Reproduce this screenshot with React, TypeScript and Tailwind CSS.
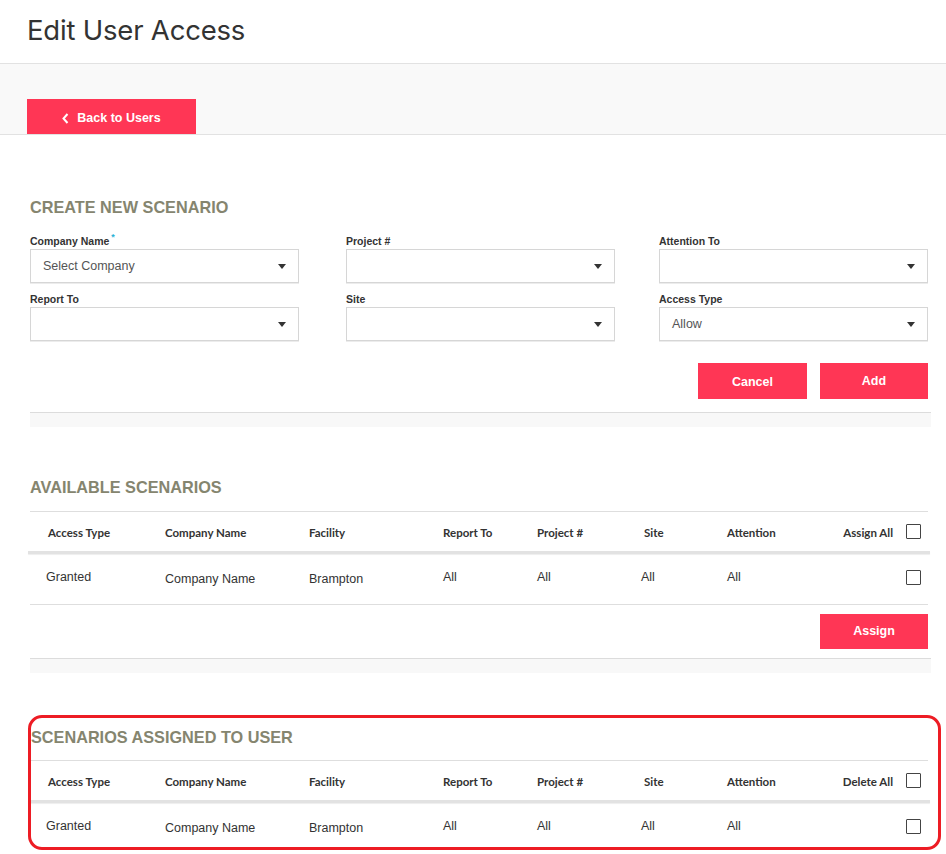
import React from 'react';

const RED = 'bg-[#ff3655]';

const Caret: React.FC = () => (
  <svg width="8" height="5" viewBox="0 0 8 5" className="shrink-0">
    <path d="M0 0h8L4 5z" fill="#333" />
  </svg>
);

const SelectBox: React.FC<{ label: string; value?: string; required?: boolean }> = ({ label, value, required }) => (
  <div className="flex w-[269px] flex-col">
    <label className="flex h-[18px] items-end pb-[2px] text-[10.5px] font-bold leading-[12px] text-[#333] font-['Liberation_Sans',Arial,sans-serif]">
      {label}
      {required && <span className="ml-[2px] -translate-y-[5px] text-[9px] leading-[9px] text-[#2bb3d6]">*</span>}
    </label>
    <div className="flex h-[34px] items-center justify-between border border-[#d6d6d6] shadow-[0_1px_0_#ececec] pl-[12px] pr-[12px]">
      <span className="text-[12.5px] text-[#555] font-['Liberation_Sans',Arial,sans-serif]">{value}</span>
      <Caret />
    </div>
  </div>
);

const Checkbox: React.FC = () => (
  <span className="block h-[15px] w-[15px] rounded-[1px] border-[1.5px] border-[#444] bg-white" />
);

const cols = 'grid grid-cols-[117px_144px_134px_94px_107px_83px_1fr_auto] items-center pl-[18px] pr-[7px]';

const ScenarioTable: React.FC<{ allLabel: string }> = ({ allLabel }) => (
  <div className="border-t border-[#dedede]">
    <div className={`${cols} h-[39px] pt-[3px] text-[11.5px] font-bold text-[#333] font-[Lato,'Noto_Sans',sans-serif]`}>
      <span>Access Type</span>
      <span>Company Name</span>
      <span>Facility</span>
      <span>Report To</span>
      <span>Project #</span>
      <span>Site</span>
      <span>Attention</span>
      <span className="flex items-center gap-[13px]">
        <span>{allLabel}</span>
        <span className="-mt-[4px]"><Checkbox /></span>
      </span>
    </div>
    <div className="-mx-[2px] h-[3px] bg-[#e2e2e2] shadow-[0_1px_1px_#eee]" />
    <div className={`${cols} h-[50px] text-[12.5px] text-[#333] font-['Liberation_Sans',Arial,sans-serif]`}>
      <span className="-ml-[2px] -mt-[3px]">Granted</span>
      <span>Company Name</span>
      <span>Brampton</span>
      <span className="-mt-[3px]">All</span>
      <span className="-mt-[3px]">All</span>
      <span className="-ml-[3px] -mt-[3px]">All</span>
      <span className="-mt-[3px]">All</span>
      <span className="flex justify-end -mt-[3px]"><Checkbox /></span>
    </div>
  </div>
);

const Heading: React.FC<{ children: React.ReactNode; className?: string }> = ({ children, className = '' }) => (
  <h2 className={`text-[16.25px] font-bold uppercase leading-[20px] text-[#85856f] font-['Liberation_Sans',Arial,sans-serif] ${className}`}>
    {children}
  </h2>
);

const Divider: React.FC = () => (
  <div className="h-[15px] border-t border-[#dcdcdc] bg-[#f8f8f8]" />
);

export default function App() {
  return (
    <div className="relative min-h-screen w-[946px] overflow-hidden bg-white">
      {/* Top title */}
      <header className="flex h-[64px] items-center border-b border-[#e2e2e2] px-[27px]">
        <h1 className="-mt-[1px] text-[27.5px] font-normal text-[#333] font-[Inter,'Noto_Sans',sans-serif] tracking-[-0.2px]">
          Edit User Access
        </h1>
      </header>

      {/* Back band */}
      <div className="flex h-[71px] items-end border-b border-[#e2e2e2] bg-[#f9f9f9] px-[27px]">
        <button className={`${RED} flex h-[35px] w-[169px] items-center justify-center gap-[8px] pt-[3px] text-white`}>
          <svg width="7" height="11" viewBox="0 0 7 11">
            <path d="M5.5 1L1.5 5.5L5.5 10" stroke="white" strokeWidth="2" fill="none" />
          </svg>
          <span className="text-[12.5px] font-bold font-['Liberation_Sans',Arial,sans-serif]">Back to Users</span>
        </button>
      </div>

      <main className="pl-[30px] pr-[15px]">
        {/* Create new scenario */}
        <section className="pt-[62px]">
          <Heading>Create New Scenario</Heading>
          <div className="mt-[14px] grid grid-cols-[316px_313px_269px] gap-y-[6px]">
            <SelectBox label="Company Name" value="Select Company" required />
            <SelectBox label="Project #" />
            <SelectBox label="Attention To" />
            <SelectBox label="Report To" />
            <SelectBox label="Site" />
            <SelectBox label="Access Type" value="Allow" />
          </div>
          <div className="mt-[22px] flex justify-end gap-[13px] pr-[3px]">
            <button className={`${RED} h-[36px] w-[109px] pt-[3px] text-[12.5px] font-bold text-white font-['Liberation_Sans',Arial,sans-serif]`}>
              Cancel
            </button>
            <button className={`${RED} h-[36px] w-[108px] text-[12.5px] font-bold text-white font-['Liberation_Sans',Arial,sans-serif]`}>
              Add
            </button>
          </div>
          <div className="mt-[13px]">
            <Divider />
          </div>
        </section>

        {/* Available scenarios */}
        <section className="pt-[50px]">
          <Heading>Available Scenarios</Heading>
          <div className="mt-[14px] pr-[3px]">
            <ScenarioTable allLabel="Assign All" />
          </div>
          <div className="mr-[3px] flex justify-end border-t border-[#dedede] py-[9px]">
            <button className={`${RED} h-[35px] w-[108px] text-[12.5px] font-bold text-white font-['Liberation_Sans',Arial,sans-serif]`}>
              Assign
            </button>
          </div>
          <Divider />
        </section>

        {/* Assigned scenarios */}
        <section className="pt-[54px]">
          <Heading className="pl-[1px]">Scenarios Assigned to User</Heading>
          <div className="mt-[13px] pr-[3px]">
            <ScenarioTable allLabel="Delete All" />
          </div>
        </section>
      </main>

      {/* annotation highlight */}
      <div className="pointer-events-none absolute left-[28px] top-[715px] h-[135px] w-[913px] rounded-[14px] border-[3px] border-[#ed1c24]" />
    </div>
  );
}
